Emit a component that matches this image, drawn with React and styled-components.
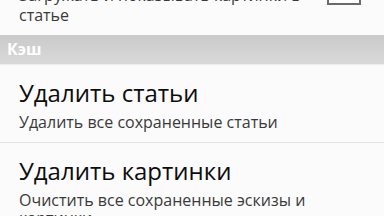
import React from "react";
import styled, {createGlobalStyle} from "styled-components";

const GlobalStyle = createGlobalStyle`
    html, body {
        margin: 0;
        padding: 0;
        background: #fbfbfb;
        overflow: hidden;
    }
    body {
        font-family: "Open Sans", "Noto Sans", sans-serif;
    }
`;

const App = () => {
    return(
        <>
        <GlobalStyle/>
        <Screen>
            <CheckRow>
                <RowText>
                    <Summary $lh={20}>Загружать и показывать картинки в статье</Summary>
                </RowText>
                <CheckBox/>
            </CheckRow>
            <Category>Кэш</Category>
            <Pref>
                <Title>Удалить статьи</Title>
                <Summary>Удалить все сохраненные статьи</Summary>
            </Pref>
            <Divider/>
            <Pref>
                <Title>Удалить картинки</Title>
                <Summary>Очистить все сохраненные эскизы и картинки</Summary>
            </Pref>
        </Screen>
        </>
    )
}

const Screen = styled.div`
    width: 384px;
    height: 216px;
    overflow: hidden;
    background: #fbfbfb;
`;

const CheckRow = styled.div`
    display: flex;
    align-items: flex-start;
    gap: 18px;
    margin-top: -15px;
    padding: 0 23px 10px 19px;
`;

const RowText = styled.div`
    flex: 1;
`;

const CheckBox = styled.div`
    width: 30px;
    height: 18px;
    border: 2px solid #6a6a6a;
    border-top: none;
    background: #fff;
`;

const Category = styled.div`
    height: 29px;
    line-height: 29px;
    padding-left: 7px;
    background: linear-gradient(#cacaca, #d9d9d9);
    border-bottom: 1px solid #ededed;
    color: #fff;
    font-weight: 700;
    font-size: 16px;
`;

const Pref = styled.div`
    padding: 12px 40px 11px 19px;
`;

const Title = styled.div`
    font-size: 24px;
    line-height: 32px;
    color: #0d0d0d;
    margin-bottom: 4px;
`;

const Summary = styled.div`
    font-size: 16px;
    line-height: ${p => p.$lh || 18}px;
    color: #3a3a3a;
`;

const Divider = styled.div`
    height: 1px;
    background: #e4e4e4;
`;

export default App;
